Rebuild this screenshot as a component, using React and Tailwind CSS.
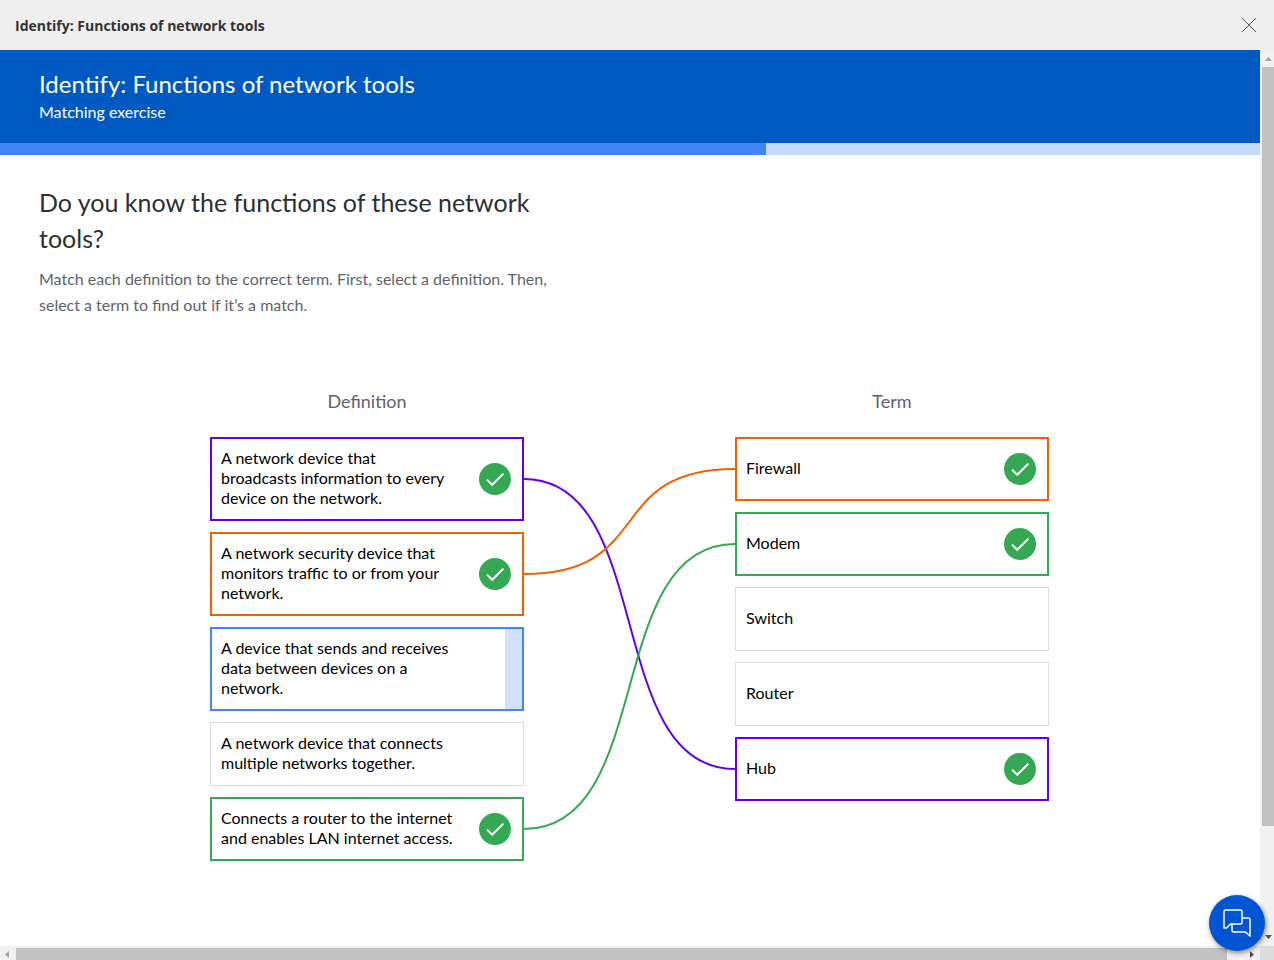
const definitions = [
  { text: "A network device that broadcasts information to every device on the network.", tone: "purple" },
  { text: "A network security device that monitors traffic to or from your network.", tone: "orange" },
  { text: "A device that sends and receives data between devices on a network.", tone: "selected" },
  { text: "A network device that connects multiple networks together.", tone: "idle" },
  { text: "Connects a router to the internet and enables LAN internet access.", tone: "green" },
];

const terms = [
  { text: "Firewall", tone: "orange" },
  { text: "Modem", tone: "green" },
  { text: "Switch", tone: "idle" },
  { text: "Router", tone: "idle" },
  { text: "Hub", tone: "purple" },
];

const tones = {
  purple: "border-2 border-[#6200ee] px-[9px] py-[9px]",
  orange: "border-2 border-[#f06400] px-[9px] py-[9px]",
  green: "border-2 border-[#34a853] px-[9px] py-[9px]",
  selected: "border-2 border-[#4285f4] px-[9px] py-[9px]",
  idle: "border border-[#dadce0] px-[10px] py-[10px]",
};

function Check() {
  return (
    <svg className="mr-[2px] size-8 shrink-0" viewBox="0 0 32 32" aria-label="Matched">
      <circle cx="16" cy="16" r="16" fill="#34a853" />
      <path d="M8 16.6 13.2 21.8 24.4 10.6" fill="none" stroke="#fff" strokeWidth="2" />
    </svg>
  );
}

function Card({ text, tone }) {
  const matched = tone !== "idle" && tone !== "selected";
  return (
    <li>
      <button
        type="button"
        aria-pressed={tone === "selected"}
        className={`relative flex min-h-16 w-full items-center justify-between bg-white text-left text-base leading-5 text-black ${tones[tone]}`}
      >
        <span className="block w-[233px] pb-[2px]">{text}</span>
        {matched && <Check />}
        {tone === "selected" && <span className="absolute inset-y-0 right-0 w-[17px] bg-[#d2e0fb]" />}
      </button>
    </li>
  );
}

function Column({ title, items }) {
  return (
    <section>
      <h3 className="text-center text-lg leading-6 font-normal text-[#5f6368]">{title}</h3>
      <ul className="mt-6 flex flex-col gap-[11px]">
        {items.map((item) => (
          <Card key={item.text} {...item} />
        ))}
      </ul>
    </section>
  );
}

function Connections() {
  return (
    <svg
      className="mt-12 h-[424px] w-full"
      viewBox="0 0 211 424"
      preserveAspectRatio="none"
      fill="none"
      strokeWidth="2"
      aria-hidden="true"
    >
      <path d="M0 42C132 42 79 332 211 332" stroke="#6200ee" />
      <path d="M0 137C132 137 79 32 211 32" stroke="#f06400" />
      <path d="M0 392C132 392 79 107 211 107" stroke="#34a853" />
    </svg>
  );
}

function Arrow({ className, d }) {
  return (
    <svg className={`size-[14px] ${className}`} viewBox="0 0 14 14" fill="currentColor" aria-hidden="true">
      <path d={d} />
    </svg>
  );
}

export default function App() {
  return (
    <div className="flex h-screen flex-col bg-white font-['Lato',sans-serif]">
      <header className="flex h-[50px] shrink-0 items-center justify-between bg-[#efefef] pr-[17px] pl-[15px]">
        <h1 className="pt-[2px] font-['Open_Sans','Noto_Sans',sans-serif] text-sm font-bold text-[#333]">
          Identify: Functions of network tools
        </h1>
        <button type="button" aria-label="Close" className="text-[#555]">
          <svg className="size-4" viewBox="0 0 16 16" stroke="currentColor" strokeWidth="1" aria-hidden="true">
            <path d="M1 1 15 15M15 1 1 15" />
          </svg>
        </button>
      </header>

      <div className="flex min-h-0 flex-1">
        <div className="min-w-0 flex-1 overflow-hidden">
          <div className="bg-[#0059c1] px-[39px] pt-[18px] pb-5 text-white">
            <h2 className="text-2xl leading-8">Identify: Functions of network tools</h2>
            <p className="text-base leading-[23px]">Matching exercise</p>
          </div>
          <div
            className="h-3 bg-[#c6dafc]"
            role="progressbar"
            aria-label="Progress"
            aria-valuenow={61}
            aria-valuemin={0}
            aria-valuemax={100}
          >
            <div className="h-full w-[60.8%] bg-[#4285f4]" />
          </div>

          <main className="px-[39px] pt-[29px]">
            <div className="max-w-[525px]">
              <h2 className="text-[25px] leading-9 text-[#2d2f31]">Do you know the functions of these network tools?</h2>
              <p className="mt-[10px] text-base leading-[26px] text-[#5f6368]">
                Match each definition to the correct term. First, select a definition. Then, select a term to find out if
                it’s a match.
              </p>
            </div>
            <div className="mx-auto mt-[71px] grid max-w-[840px] grid-cols-[314px_minmax(0,211px)_314px]">
              <Column title="Definition" items={definitions} />
              <Connections />
              <Column title="Term" items={terms} />
            </div>
          </main>
        </div>
        <div className="flex w-[14px] shrink-0 flex-col bg-[#f1f1f1]" aria-hidden="true">
          <Arrow className="mt-[2px] ml-[1px] text-[#a3a3a3]" d="M4 9 7.5 5 11 9Z" />
          <div className="mt-px ml-[2px] h-[759px] bg-[#c1c1c1]" />
          <Arrow className="mt-auto mb-[2px] ml-[1px] text-[#505050]" d="M4 5 11 5 7.5 9Z" />
        </div>
      </div>

      <div className="flex h-[14px] shrink-0 bg-[#f1f1f1]" aria-hidden="true">
        <Arrow className="mt-[1px] mr-[2px] text-[#a3a3a3]" d="M9 4 9 11 5 7.5Z" />
        <div className="mt-[2px] mr-[18px] flex-1 bg-[#c1c1c1]" />
        <Arrow className="mt-[1px] text-[#505050]" d="M5 4 9 7.5 5 11Z" />
        <div className="ml-px w-[14px] bg-[#dcdcdc]" />
      </div>

      <button
        type="button"
        aria-label="Open chat"
        className="fixed right-[9px] bottom-[9px] flex size-14 items-center justify-center rounded-full bg-[#0056d2] text-white shadow-[1px_2px_5px_rgba(0,0,0,0.45)]"
      >
        <svg
          className="size-8"
          viewBox="0 0 32 32"
          fill="none"
          stroke="currentColor"
          strokeWidth="1.5"
          strokeLinejoin="round"
          aria-hidden="true"
        >
          <path d="M4.5 3H19.5A1.500 1.500 0 0 1 21 4.500V15.500A1.500 1.500 0 0 1 19.500 17H9.500L5.500 21H3V4.500A1.500 1.500 0 0 1 4.500 3Z" />
          <path d="M21 11H27.500A1.500 1.500 0 0 1 29 12.500V29L24.500 25H12.500A1.500 1.500 0 0 1 11 23.500V17" />
        </svg>
      </button>
    </div>
  );
}
